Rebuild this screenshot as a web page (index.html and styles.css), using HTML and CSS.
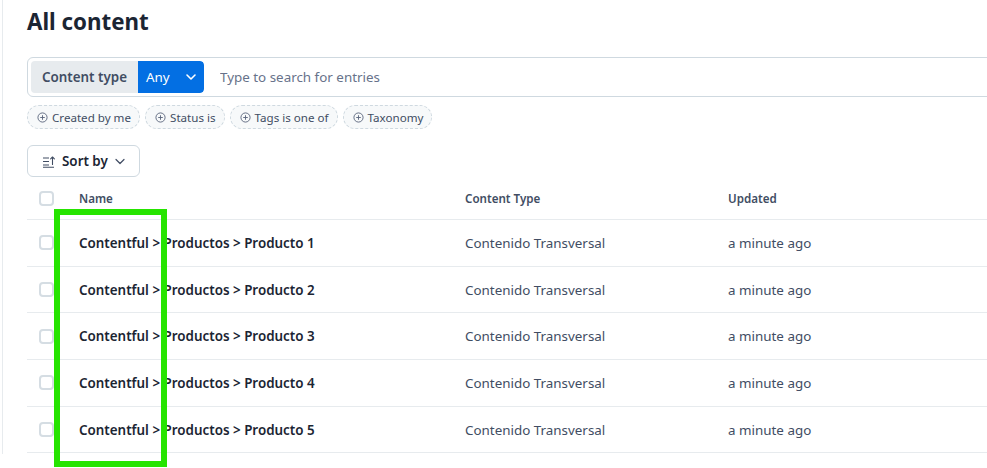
FILE: index.html
```html
<!DOCTYPE html>
<html lang="en">
<head>
    <meta charset="UTF-8">
    <meta name="viewport" content="width=device-width, initial-scale=1.0">
    <title>All content</title>
    <link rel="stylesheet" href="styles.css">
</head>
<body>
    <div class="page">
        <main class="content">
            <h1 class="title">All content</h1>

            <div class="search">
                <div class="ctype">
                    <span class="ctype-label">Content type</span>
                    <span class="ctype-any">Any
                        <svg width="12" height="12" viewBox="0 0 12 12"><path d="M2 4l4 4 4-4" fill="none" stroke="#fff" stroke-width="1.6" stroke-linecap="round" stroke-linejoin="round"/></svg>
                    </span>
                </div>
                <input class="search-input" type="text" placeholder="Type to search for entries">
            </div>

            <div class="filters">
                <span class="pill"><svg class="plus" width="11" height="11" viewBox="0 0 12 12"><circle cx="6" cy="6" r="5" fill="none" stroke="#5a657c" stroke-width="1"/><path d="M6 3.5v5M3.5 6h5" stroke="#5a657c" stroke-width="1"/></svg>Created by me</span>
                <span class="pill"><svg class="plus" width="11" height="11" viewBox="0 0 12 12"><circle cx="6" cy="6" r="5" fill="none" stroke="#5a657c" stroke-width="1"/><path d="M6 3.5v5M3.5 6h5" stroke="#5a657c" stroke-width="1"/></svg>Status is</span>
                <span class="pill"><svg class="plus" width="11" height="11" viewBox="0 0 12 12"><circle cx="6" cy="6" r="5" fill="none" stroke="#5a657c" stroke-width="1"/><path d="M6 3.5v5M3.5 6h5" stroke="#5a657c" stroke-width="1"/></svg>Tags is one of</span>
                <span class="pill"><svg class="plus" width="11" height="11" viewBox="0 0 12 12"><circle cx="6" cy="6" r="5" fill="none" stroke="#5a657c" stroke-width="1"/><path d="M6 3.5v5M3.5 6h5" stroke="#5a657c" stroke-width="1"/></svg>Taxonomy</span>
            </div>

            <button class="sort">
                <svg width="14" height="14" viewBox="0 0 14 14"><path d="M1 4h6M1 7.5h6M1 11h6M1 13.2h11" fill="none" stroke="#414d63" stroke-width="1.1"/><path d="M10.5 10.5V3M8.6 4.9l1.9-1.9 1.9 1.9" fill="none" stroke="#414d63" stroke-width="1.1" stroke-linecap="round" stroke-linejoin="round"/></svg>
                <span>Sort by</span>
                <svg width="12" height="12" viewBox="0 0 12 12"><path d="M2 4.5l4 4 4-4" fill="none" stroke="#414d63" stroke-width="1.2" stroke-linecap="round" stroke-linejoin="round"/></svg>
            </button>

            <div class="table">
                <div class="row head">
                    <span class="check"></span>
                    <span>Name</span>
                    <span>Content Type</span>
                    <span>Updated</span>
                </div>
                <div class="row">
                    <span class="check"></span>
                    <span class="name">Contentful &gt; Productos &gt; Producto 1</span>
                    <span>Contenido Transversal</span>
                    <span>a minute ago</span>
                </div>
                <div class="row">
                    <span class="check"></span>
                    <span class="name">Contentful &gt; Productos &gt; Producto 2</span>
                    <span>Contenido Transversal</span>
                    <span>a minute ago</span>
                </div>
                <div class="row">
                    <span class="check"></span>
                    <span class="name">Contentful &gt; Productos &gt; Producto 3</span>
                    <span>Contenido Transversal</span>
                    <span>a minute ago</span>
                </div>
                <div class="row">
                    <span class="check"></span>
                    <span class="name">Contentful &gt; Productos &gt; Producto 4</span>
                    <span>Contenido Transversal</span>
                    <span>a minute ago</span>
                </div>
                <div class="row">
                    <span class="check"></span>
                    <span class="name">Contentful &gt; Productos &gt; Producto 5</span>
                    <span>Contenido Transversal</span>
                    <span>a minute ago</span>
                </div>
            </div>
        </main>

        <div class="highlight"></div>
    </div>
</body>
</html>
```

FILE: styles.css
```css
html, body {
    margin: 0;
    background: #fff;
    overflow: hidden;
}
body {
    font-family: "Noto Sans", "Open Sans", Arial, sans-serif;
    color: #1b2533;
}
.page {
    position: relative;
    height: 468px;
    overflow: hidden;
}
.content {
    margin-left: 2px;
    padding-left: 24px;
    border-left: 1px solid #e7ebee;
    width: 1100px;
    height: 454px;
}
.title {
    margin: 0;
    padding-top: 6px;
    font-size: 22.3px;
    line-height: 32px;
    font-weight: 700;
    color: #1b2533;
}
.search {
    display: flex;
    align-items: center;
    margin-top: 19px;
    height: 40px;
    box-sizing: border-box;
    border: 1px solid #cfd9e0;
    border-radius: 6px;
    padding: 3px;
}
.ctype {
    display: flex;
    height: 32px;
    border-radius: 4px;
    overflow: hidden;
    font-size: 13.4px;
    white-space: nowrap;
}
.ctype-label {
    display: flex;
    align-items: center;
    justify-content: center;
    background: #e7ebee;
    color: #414d63;
    font-weight: 600;
    width: 107px;
}
.ctype-any {
    display: flex;
    align-items: center;
    justify-content: space-between;
    box-sizing: border-box;
    background: #036fe3;
    color: #fff;
    padding: 0 7px 0 8px;
    width: 66px;
    border-radius: 0 4px 4px 0;
}
.search-input {
    border: 0;
    outline: 0;
    margin-left: 16px;
    padding: 0;
    font-family: inherit;
    font-size: 13.4px;
    color: #414d63;
    flex: 1;
}
.search-input::placeholder {
    color: #67728a;
}
.filters {
    display: flex;
    gap: 5px;
    margin-top: 8px;
}
.pill {
    display: flex;
    align-items: center;
    gap: 4px;
    height: 24px;
    box-sizing: border-box;
    padding: 0 8px 0 9px;
    border: 1px dashed #cfd9e0;
    border-radius: 12px;
    background: #f7f9fa;
    font-size: 11.6px;
    color: #414d63;
    white-space: nowrap;
}
.sort {
    display: flex;
    align-items: center;
    gap: 6px;
    margin-top: 16px;
    height: 32px;
    padding: 0 13px 0 14px;
    background: #fff;
    border: 1px solid #cfd9e0;
    border-radius: 6px;
    font-family: inherit;
    font-size: 13.4px;
    font-weight: 600;
    color: #1b2533;
    white-space: nowrap;
}
.table {
    margin-top: 8px;
}
.row {
    display: grid;
    grid-template-columns: 52px 386px 263px 1fr;
    align-items: center;
    height: 45.7px;
    border-bottom: 1px solid #e7ebee;
    font-size: 13.4px;
    color: #414d63;
    white-space: nowrap;
}
.row.head {
    height: 35px;
    box-sizing: border-box;
    padding-bottom: 7px;
    font-size: 11.6px;
    font-weight: 600;
}
.check {
    width: 15px;
    height: 15px;
    box-sizing: border-box;
    margin-left: 12px;
    border: 2px solid #d5dde3;
    border-radius: 4px;
}
.name {
    color: #1b2533;
    font-weight: 600;
}
.highlight {
    position: absolute;
    left: 54px;
    top: 209px;
    width: 113px;
    height: 258px;
    box-sizing: border-box;
    border: 6px solid #26e400;
}
```
